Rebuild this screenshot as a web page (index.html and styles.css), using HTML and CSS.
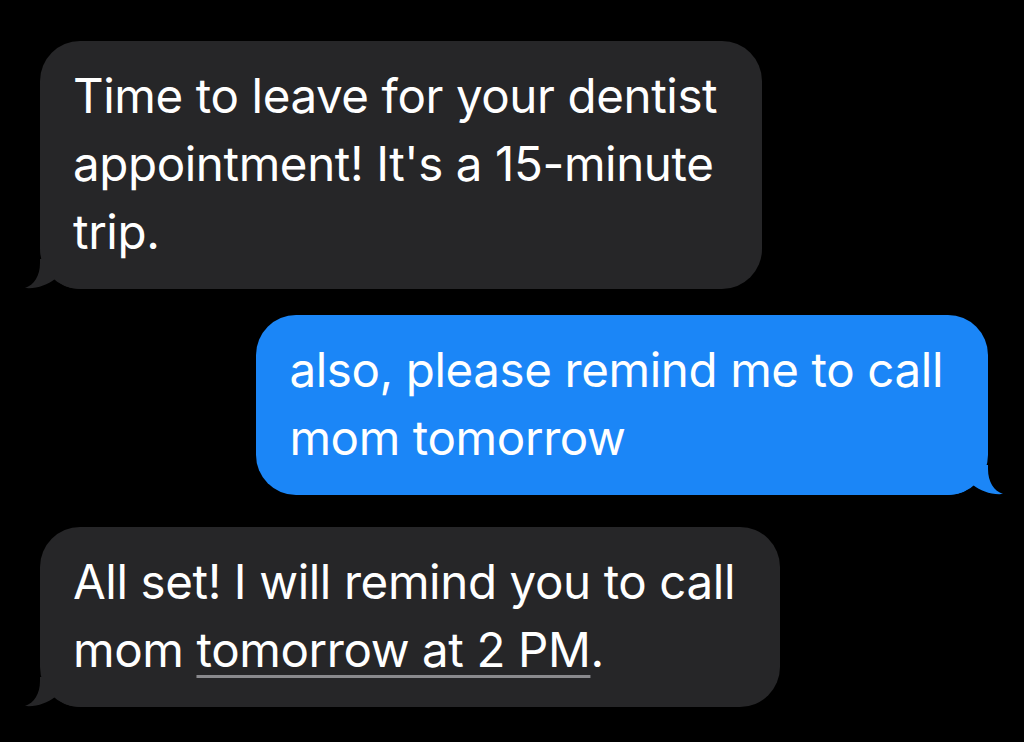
FILE: index.html
```html
<!DOCTYPE html>
<html lang="en">
<head>
  <meta charset="UTF-8">
  <meta name="viewport" content="width=device-width, initial-scale=1.0">
  <title>Messages</title>
  <link rel="stylesheet" href="styles.css">
</head>
<body>
  <div class="thread">
    <div class="bubble received">
      Time to leave for your dentist<br>
      appointment! It's a 15-minute<br>
      trip.
      <svg class="tail" width="56" height="30" viewBox="0 0 56 30">
        <path d="M15 0 L15 4 C15 17 9 26 0 29 C12 30 22 26 30 20 C36 26 45 30 56 30 L56 0 Z" />
      </svg>
    </div>

    <div class="bubble sent">
      also, please remind me to call<br>
      mom tomorrow
      <svg class="tail" width="56" height="30" viewBox="0 0 56 30">
        <path d="M41 0 L41 4 C41 17 47 26 56 29 C44 30 34 26 26 20 C20 26 11 30 0 30 L0 0 Z" />
      </svg>
    </div>

    <div class="bubble received">
      All set! I will remind you to call<br>
      mom <span class="link">tomorrow at 2 PM</span>.
      <svg class="tail" width="56" height="30" viewBox="0 0 56 30">
        <path d="M15 0 L15 4 C15 17 9 26 0 29 C12 30 22 26 30 20 C36 26 45 30 56 30 L56 0 Z" />
      </svg>
    </div>
  </div>
</body>
</html>
```

FILE: styles.css
```css
body {
  margin: 0;
  background: #000;
  font-family: Inter, "Noto Sans", sans-serif;
}

.thread {
  display: flex;
  flex-direction: column;
  padding: 41px 36px 0 40px;
}

.bubble {
  position: relative;
  white-space: nowrap;
  font-size: 47.5px;
  line-height: 68px;
  letter-spacing: -0.4px;
  color: #fff;
  border-radius: 40px;
  padding: 21px 45px 23px 33px;
}

.received {
  align-self: flex-start;
  background: #262628;
}

.sent {
  align-self: flex-end;
  background: #1b86f7;
  margin: 26px 0 32px;
}

.tail {
  position: absolute;
  bottom: 0;
}

.received .tail {
  left: -15px;
  fill: #262628;
}

.sent .tail {
  right: -15px;
  fill: #1b86f7;
}

.link {
  text-decoration: underline;
  text-decoration-color: #8a8a8e;
  text-decoration-thickness: 3px;
  text-underline-offset: 8px;
}
```
